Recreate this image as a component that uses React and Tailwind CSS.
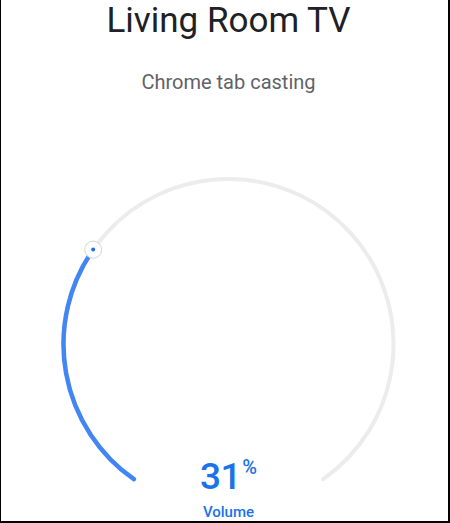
import React from 'react'

const CX = 228.5
const CY = 344
const R = 165
const GAP = 35 // degrees each side of straight down
const VALUE = 31

// angle measured from straight down, clockwise through the left side
const pt = (deg) => {
  const a = (deg * Math.PI) / 180
  return [CX - R * Math.sin(a), CY + R * Math.cos(a)]
}

function Dial() {
  const start = pt(GAP)
  const end = pt(360 - GAP)
  const knobDeg = GAP + ((360 - 2 * GAP) * VALUE) / 100
  const knob = pt(knobDeg)
  const large = knobDeg - GAP > 180 ? 1 : 0

  return (
    <svg width="447" height="430" viewBox="1 92 447 430" className="block">
      <path
        d={`M ${start[0]} ${start[1]} A ${R} ${R} 0 1 1 ${end[0]} ${end[1]}`}
        fill="none"
        stroke="#ececec"
        strokeWidth="4"
        strokeLinecap="round"
      />
      <path
        d={`M ${start[0]} ${start[1]} A ${R} ${R} 0 ${large} 1 ${knob[0]} ${knob[1]}`}
        fill="none"
        stroke="#4285f4"
        strokeWidth="4.5"
        strokeLinecap="round"
      />
      <circle cx={knob[0]} cy={knob[1]} r="8.5" fill="#fff" stroke="#dadce0" strokeWidth="1.2" />
      <circle cx={knob[0]} cy={knob[1]} r="2" fill="#1a73e8" />
    </svg>
  )
}

export default function App() {
  return (
    <div
      className="w-[450px] h-[523px] box-border bg-white border-l border-r-2 border-b-2 border-black flex flex-col overflow-hidden"
      style={{ fontFamily: 'Roboto, "Noto Sans", sans-serif' }}
    >
      <div className="flex flex-col items-center pl-[8px]">
        <h1 className="pt-[3px] text-[35px] leading-none font-normal text-[#202124]">
          Living Room TV
        </h1>
        <p className="mt-[34px] text-[20px] leading-none text-[#5f6368]">
          Chrome tab casting
        </p>
      </div>

      <div className="relative">
        <Dial />
        <div className="absolute left-0 right-0 top-[366px] pl-[8px] flex flex-col items-center text-[#1a73e8]">
          <div className="flex items-start leading-none">
            <span className="text-[37px] font-medium tracking-[-0.5px]">{VALUE}</span>
            <span className="text-[20px] font-medium -mt-[1px] ml-[1px]">%</span>
          </div>
          <span className="mt-[10px] text-[15px] font-medium leading-none">Volume</span>
        </div>
      </div>
    </div>
  )
}
